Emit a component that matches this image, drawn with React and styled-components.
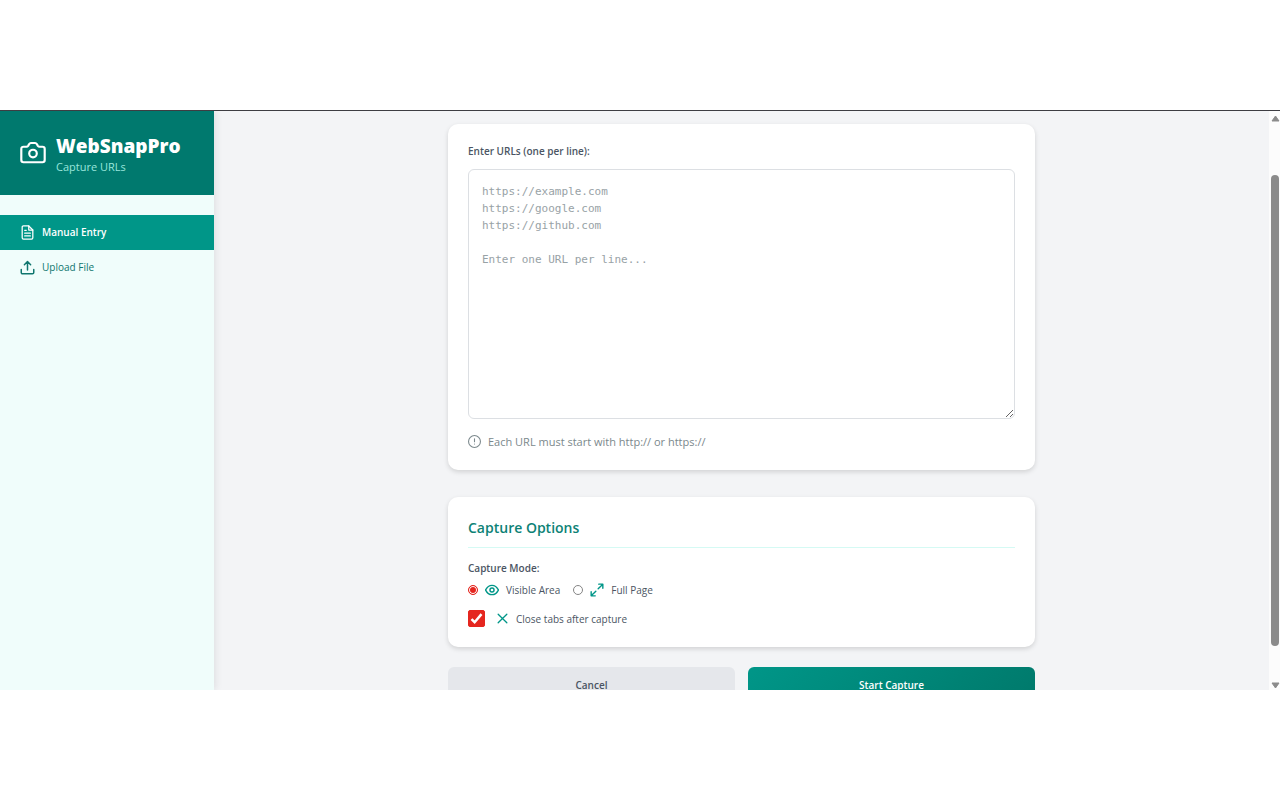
import React, { useState } from "react";
import styled, { createGlobalStyle, css } from "styled-components";

const GlobalStyle = createGlobalStyle`
  *, *::before, *::after { box-sizing: border-box; }
  body { margin: 0; background: #fff; }
  body, button, input { font-family: "Open Sans", "Noto Sans", sans-serif; }
`;

const Page = styled.div`
  height: 100vh;
  padding: 110px 0;
  display: flex;
`;

const Window = styled.div`
  flex: 1;
  min-width: 0;
  display: flex;
  overflow: hidden;
  border-top: 1px solid #3d3d42;
  background: #f3f4f6;
`;

const Sidebar = styled.aside`
  flex: none;
  width: 214px;
  background: #f0fdfb;
  box-shadow: 2px 0 7px rgba(0, 0, 0, 0.08);
`;

const Brand = styled.header`
  display: flex;
  align-items: center;
  gap: 10px;
  height: 84px;
  padding: 0 20px;
  color: #fff;
  background: #00796e;
`;

const BrandText = styled.div`
  padding-top: 3px;
`;

const BrandName = styled.h1`
  margin: 0;
  font-size: 19px;
  line-height: 24px;
  font-weight: 800;
`;

const Tagline = styled.p`
  margin: 0;
  font-size: 11px;
  line-height: 18px;
  color: #99e6dc;
`;

const Nav = styled.nav`
  display: flex;
  flex-direction: column;
  padding-top: 20px;
`;

const NavLink = styled.a`
  display: flex;
  align-items: center;
  gap: 7px;
  height: 35px;
  padding: 0 20px 1px;
  font-size: 10px;
  text-decoration: none;
  color: #0f766e;
  ${(p) =>
    p.$active &&
    css`
      color: #fff;
      font-weight: 600;
      background: #009688;
    `}
`;

const Main = styled.main`
  flex: 1;
  min-width: 0;
  overflow: hidden;
  padding: 13px 20px 0;
`;

const Form = styled.form`
  max-width: 587px;
  margin: 0 auto;
`;

const Card = styled.section`
  padding: 20px;
  border-radius: 10px;
  background: #fff;
  box-shadow: 0 2px 5px rgba(0, 0, 0, 0.14);
  margin-bottom: ${(p) => p.$gap}px;
`;

const FieldLabel = styled.label`
  display: block;
  margin-bottom: 10px;
  font-size: 10px;
  line-height: 15px;
  font-weight: 600;
  color: #4b5563;
`;

const UrlBox = styled.textarea`
  display: block;
  width: 100%;
  height: 250px;
  padding: 13px;
  border: 1px solid #dcdfe3;
  border-radius: 6px;
  background: #fff;
  color: #374151;
  font-family: "DejaVu Sans Mono", "Liberation Mono", monospace;
  font-size: 11px;
  line-height: 17px;
  resize: vertical;
  outline: none;
  &::placeholder { color: #98a2a6; opacity: 1; }
`;

const Hint = styled.p`
  display: flex;
  align-items: center;
  gap: 7px;
  margin: 14px 0 0;
  font-size: 11px;
  line-height: 17px;
  color: #7b888c;
`;

const Title = styled.h2`
  margin: 0 0 13px;
  padding-bottom: 8px;
  border-bottom: 1px solid #d5faf4;
  font-size: 14px;
  line-height: 22px;
  font-weight: 600;
  color: #0d8276;
`;

const ModeGroup = styled.fieldset`
  min-width: 0;
  margin: 0 0 12px;
  padding: 0;
  border: 0;
`;

const Legend = styled.legend`
  padding: 0;
  margin-bottom: 6px;
  font-size: 10px;
  line-height: 15px;
  font-weight: 600;
  color: #4b5563;
`;

const OptionRow = styled.div`
  display: flex;
  gap: 13px;
`;

const Option = styled.label`
  display: flex;
  align-items: center;
  gap: 7px;
  font-size: 10px;
  line-height: 16px;
  color: #4b5563;
`;

const Radio = styled.input`
  appearance: none;
  width: 10px;
  height: 10px;
  margin: 0;
  border: 1px solid #858585;
  border-radius: 50%;
  background: #fff;
  &:checked {
    border-color: #e5261f;
    background: #e5261f;
    box-shadow: inset 0 0 0 1px #fff;
  }
`;

const Tick = styled.input`
  appearance: none;
  grid-area: 1 / 1;
  width: 17px;
  height: 17px;
  margin: 0;
  border: 1px solid #858585;
  border-radius: 2px;
  background: #fff;
  &:checked { border-color: #e5261f; background: #e5261f; }
`;

const TickBox = styled.span`
  display: grid;
  place-items: center;
  margin-right: 4px;
  svg { grid-area: 1 / 1; z-index: 1; pointer-events: none; }
`;

const Actions = styled.div`
  display: grid;
  grid-template-columns: 1fr 1fr;
  gap: 13px;
`;

const Button = styled.button`
  height: 36px;
  padding: 0;
  border: 0;
  border-radius: 6px;
  font-size: 10px;
  line-height: 15px;
  font-weight: 600;
  color: ${(p) => (p.$primary ? "#fff" : "#4b5563")};
  background: ${(p) => (p.$primary ? "linear-gradient(135deg, #009688, #00796b)" : "#e5e7eb")};
`;

const ScrollTrack = styled.div`
  flex: none;
  width: 11px;
  display: flex;
  flex-direction: column;
  align-items: center;
  justify-content: space-between;
  padding: 4px 0 1px 1px;
  background: #fcfcfc;
`;

const ScrollSpace = styled.div`
  flex: 1;
  display: flex;
  flex-direction: column;
  padding: 53px 0 36px;
`;

const ScrollThumb = styled.div`
  flex: 1;
  width: 8px;
  border-radius: 4px;
  background: #8b8b8b;
`;

const IconSvg = styled.svg`
  flex: none;
`;

const Icon = ({ size, color = "currentColor", width = 2, children }) => (
  <IconSvg
    width={size}
    height={size}
    viewBox="0 0 24 24"
    fill="none"
    stroke={color}
    strokeWidth={width}
    strokeLinecap="round"
    strokeLinejoin="round"
    aria-hidden="true"
  >
    {children}
  </IconSvg>
);

const placeholder =
  "https://example.com\nhttps://google.com\nhttps://github.com\n\nEnter one URL per line...";

export default function App() {
  const [mode, setMode] = useState("visible");
  const [closeTabs, setCloseTabs] = useState(true);

  return (
    <>
      <GlobalStyle />
      <Page>
        <Window>
          <Sidebar>
            <Brand>
              <Icon size={26}>
                <path d="M1.200 8.200a2 2 0 0 1 2-2h2.800a2 2 0 0 0 1.500-.8l1-1.700a2 2 0 0 1 1.600-.9h3.800a2 2 0 0 1 1.600.9l1 1.700a2 2 0 0 0 1.500.8h2.800a2 2 0 0 1 2 2v10.300a2 2 0 0 1-2 2H3.200a2 2 0 0 1-2-2z" />
                <circle cx="12" cy="12.500" r="3.5" />
              </Icon>
              <BrandText>
                <BrandName>WebSnapPro</BrandName>
                <Tagline>Capture URLs</Tagline>
              </BrandText>
            </Brand>
            <Nav>
              <NavLink href="#manual" $active>
                <Icon size={15}>
                  <path d="M14 1.500H5.500a2 2 0 0 0-2 2v17a2 2 0 0 0 2 2h13a2 2 0 0 0 2-2V8z" />
                  <path d="M14 1.500V8h6.500M16.500 13h-9M16.500 17.500h-9M10 8.500H7.500" />
                </Icon>
                Manual Entry
              </NavLink>
              <NavLink href="#upload">
                <Icon size={15} width={2.4}>
                  <path d="M22 15v5a2 2 0 0 1-2 2H4a2 2 0 0 1-2-2v-5M17 7.500l-5-5-5 5M12 2.500V16" />
                </Icon>
                Upload File
              </NavLink>
            </Nav>
          </Sidebar>

          <Main>
            <Form onSubmit={(e) => e.preventDefault()}>
              <Card $gap={27}>
                <FieldLabel htmlFor="urls">Enter URLs (one per line):</FieldLabel>
                <UrlBox id="urls" placeholder={placeholder} spellCheck={false} />
                <Hint>
                  <Icon size={13}>
                    <circle cx="12" cy="12" r="11" />
                    <path d="M12 7v5.500M12 16.500v.1" />
                  </Icon>
                  Each URL must start with http:// or https://
                </Hint>
              </Card>

              <Card $gap={20}>
                <Title>Capture Options</Title>
                <ModeGroup>
                  <Legend>Capture Mode:</Legend>
                  <OptionRow>
                    <Option>
                      <Radio type="radio" name="mode" checked={mode === "visible"} onChange={() => setMode("visible")} />
                      <Icon size={14} color="#009688" width={2.4}>
                        <path d="M1 12s4-8 11-8 11 8 11 8-4 8-11 8S1 12 1 12z" />
                        <circle cx="12" cy="12" r="3.5" />
                      </Icon>
                      Visible Area
                    </Option>
                    <Option>
                      <Radio type="radio" name="mode" checked={mode === "full"} onChange={() => setMode("full")} />
                      <Icon size={14} color="#009688" width={2.4}>
                        <path d="M15 2h7v7M9 22H2v-7M22 2l-8 8M2 22l8-8" />
                      </Icon>
                      Full Page
                    </Option>
                  </OptionRow>
                </ModeGroup>
                <Option>
                  <TickBox>
                    <Tick type="checkbox" checked={closeTabs} onChange={(e) => setCloseTabs(e.target.checked)} />
                    {closeTabs && (
                      <Icon size={15} color="#fff" width={4}>
                        <path d="M4 13l5 5L20 5" strokeLinecap="butt" strokeLinejoin="miter" />
                      </Icon>
                    )}
                  </TickBox>
                  <Icon size={13} color="#009688" width={2.4}>
                    <path d="M20 4L4 20M4 4l16 16" />
                  </Icon>
                  Close tabs after capture
                </Option>
              </Card>

              <Actions>
                <Button type="button">Cancel</Button>
                <Button type="submit" $primary>Start Capture</Button>
              </Actions>
            </Form>
          </Main>

          <ScrollTrack aria-hidden="true">
            <svg width="9" height="7" viewBox="0 0 9 7"><path d="M4.500 1L8 6H1z" fill="#8b8b8b" stroke="#8b8b8b" strokeLinejoin="round" /></svg>
            <ScrollSpace><ScrollThumb /></ScrollSpace>
            <svg width="9" height="7" viewBox="0 0 9 7"><path d="M4.500 6L8 1H1z" fill="#8b8b8b" stroke="#8b8b8b" strokeLinejoin="round" /></svg>
          </ScrollTrack>
        </Window>
      </Page>
    </>
  );
}
